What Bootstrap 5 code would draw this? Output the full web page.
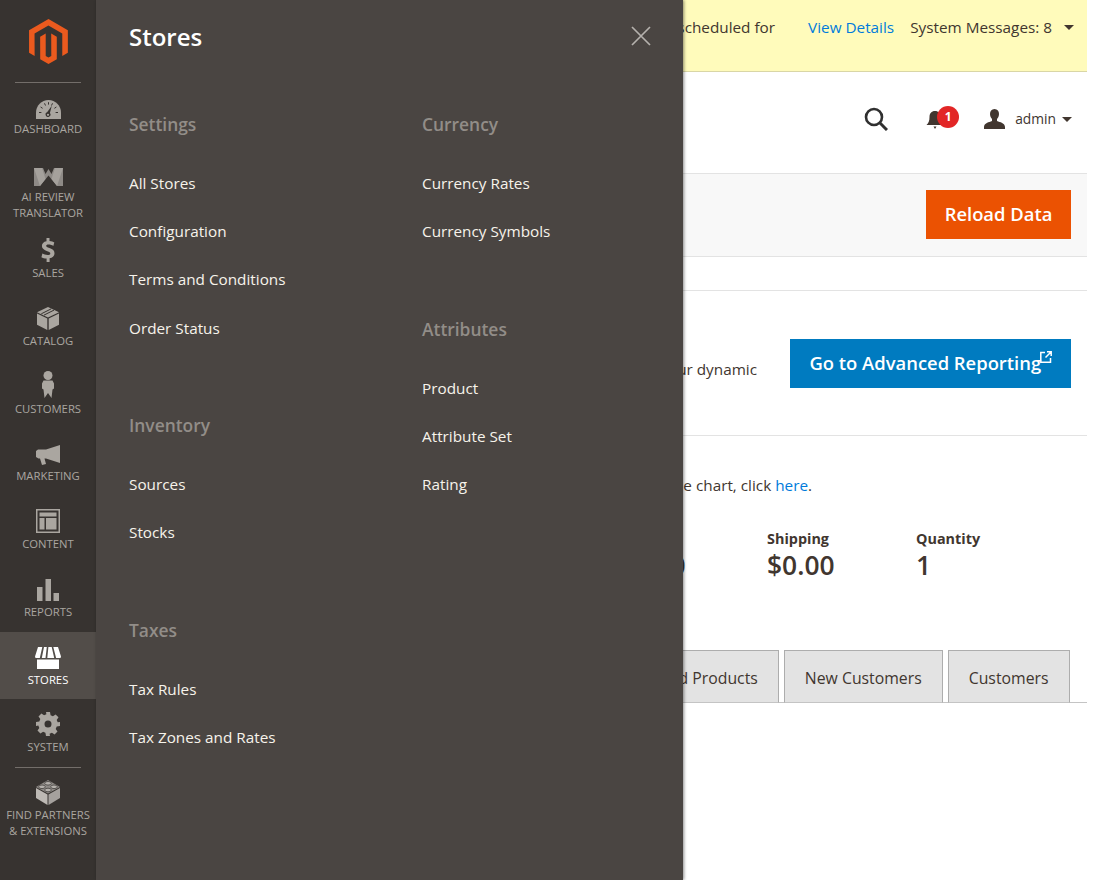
<!DOCTYPE html>
<html lang="en"><head><meta charset="utf-8"><title>Dashboard</title>
<link href="https://cdn.jsdelivr.net/npm/bootstrap@5.3.0/dist/css/bootstrap.min.css" rel="stylesheet">
<style>
html,body{height:880px;overflow:hidden}
body{font-family:"Open Sans",sans-serif;color:#41362f;background:#fff;font-size:15.3px}
.shell{width:1087px;height:880px;position:relative;overflow:hidden}
.rail{width:96px;flex:none;background:#373330;height:880px}
.rail-logo{height:82px}
.rail-rule{height:1px;background:#736e6a;margin:0 15px}
.rail-item{height:67.75px;color:#aaa6a0;font-size:11.3px;line-height:16px;text-align:center;text-transform:uppercase;text-decoration:none;display:block;white-space:nowrap}
.rail-item .glyph{height:37px;margin-bottom:3px;display:flex;justify-content:center;align-items:flex-end}
.rail-item svg{display:block}
.rail-first{height:66px}
.rail-first .glyph{height:36px;margin-bottom:2px}
.rail-tall{height:76px}
.rail-last .glyph{margin-bottom:2px}
.rail-active{background:#524d49;color:#fff}
.stage{width:991px;flex:none}
.msgbar{height:72px;background:#fffbbb;border-bottom:1px solid #d9d6a6;padding:17px 13px 0 0;line-height:20px}
.msgbar a,.plain-link{color:#007bdb;text-decoration:none}
.topbar{height:102px;border-bottom:1px solid #e3e3e3;padding:0 15px 8px 0}
.tool-name{font-size:13.8px;padding-top:2px}
.bell-wrap{width:36px;height:26px}
.bell-count{position:absolute;left:12px;top:0;width:22px;height:22px;background:#e22626;color:#fff;border-radius:50%;font-size:12px;font-weight:700;line-height:22px;text-align:center}
.caret{display:inline-block;border:5px solid transparent;border-top:5px solid #41362f;border-bottom:0}
.band{height:83px;background:#f8f8f8;border-bottom:1px solid #e3e3e3;padding:0 16px 2px 0}
.big-btn{border-radius:0;border:0;color:#fff;font-size:18.4px;font-weight:600;height:49px;line-height:47px;padding:0;white-space:nowrap}
.big-btn:hover{color:#fff}
.btn-reload{background:#eb5202;width:145px}
.btn-report{background:#007bc0;width:281px;text-align:left;padding-left:19.5px}
.btn-report svg{vertical-align:7px;margin-left:-1px}
.gap-strip{height:34px;border-bottom:1px solid #e3e3e3}
.report-sect{height:145px;border-bottom:1px solid #e3e3e3;padding:48px 16px 0 0;gap:33px}
.report-sect p{margin:20px 0 0;line-height:20px}
.chart-line{margin:0;padding:39px 275px 0 0;line-height:20px;text-align:right}
.stats{padding-top:34px;height:155px;padding-right:18px}
.stat-cell{width:149px}
.stat-last{width:153px}
.stat-cell b{display:block;font-weight:700;font-size:14.4px;line-height:20px}
.stat-cell span{display:block;font-size:26.4px;font-weight:600;line-height:32px}
.tabset{height:53px;border-bottom:1px solid #c4c4c4;padding-right:17.5px;gap:5px}
.tabset .tab-cell{height:53px;background:#e3e3e3;border:1px solid #adadad;border-bottom:1px solid #c4c4c4;padding:17px 20px 0;line-height:20px;font-size:15.8px;white-space:nowrap;color:#41362f;text-decoration:none;display:block}
.slide{position:absolute;left:96px;top:0;width:587px;height:880px;background:#4a4542;box-shadow:1px 0 3px rgba(0,0,0,.45);color:#fff;padding:0 0 0 33px}
.slide-title{font-size:24px;font-weight:600;line-height:32px;margin:0;padding-top:21px;height:112px}
.slide-close{position:absolute;left:535px;top:26px;width:20px;height:20px;background:none;border:0;padding:0}
.slide-col{width:293px;flex:none}
.slide-head{font-size:17.4px;font-weight:600;color:#928d88;line-height:24px;margin:0;height:59px}
.slide-links{margin:0 0 49.4px;padding:0}
.slide-links li{height:48.2px;line-height:24px}
.slide-links a{color:#f7f3eb;text-decoration:none;font-size:15.3px}
</style></head><body>
<div class="shell d-flex">
<nav class="rail">
<div class="rail-logo d-flex justify-content-center pt-3"><svg width="39" height="45" viewBox="0 0 43.2 50" style="margin-top:3px"><path fill="#eb5a1e" d="M21.6 0 0 12.5v25l6.200 3.600-.1-25L21.500 7.100l15.400 8.900v25l6.200-3.600v-25z"/><path fill="#eb5a1e" d="M24.700 41.100l-3.100 1.800-3.100-1.800V16.100l-6.200 3.600.1 25 9.200 5.300 9.200-5.300V19.700l-6.200-3.600z"/></svg></div>
<div class="rail-rule"></div>
<a class="rail-item rail-first" href="#"><span class="glyph"><svg width="25" height="19" viewBox="0 0 25 19"><path fill="#aaa6a0" d="M12.500 0C5.600 0 0 5.600 0 12.500V19h25v-6.500C25 5.600 19.400 0 12.500 0z"/><path fill="none" stroke="#373330" stroke-width="1" d="M3 12.500h2.400M4.600 7l2 1.300M8.500 3.300l1 2.200M12.500 2.200v2.400M16.500 3.300l-1 2.200M20.400 7l-2 1.300M22 12.500h-2.400"/><path fill="#373330" d="M15.800 5.700 13.900 13a2.400 2.400 0 1 1-2.800-.7z"/><circle cx="12" cy="14.800" r="1.100" fill="#aaa6a0"/></svg></span>Dashboard</a>
<a class="rail-item rail-tall" href="#"><span class="glyph"><svg width="29" height="18" viewBox="0 0 29 18"><path fill="#8e8a86" d="M0 0H9L11.500 6 14.500 1 17.500 6 20 0H29V18H23L14.500 7.500 6 18H0z"/><path fill="#a5a19c" d="M0 0 6 18 11.500 11 8 0zM29 0 23 18 17.500 11 21 0z"/></svg></span>AI Review<br>Translator</a>
<a class="rail-item" href="#"><span class="glyph"><svg width="14" height="24" viewBox="0 0 14 24"><path fill="#aaa6a0" d="M5.500 0h3v3c2 .2 3.700.8 4.800 1.500l-1 3.500C11 7.200 9.500 6.600 7.500 6.600c-1.700 0-2.300.6-2.300 1.300 0 .8 1 1.300 3.300 2.100 3.400 1.200 5 2.700 5 5.300 0 2.500-1.700 4.500-4.900 5V24h-3v-3.400c-2-.1-4-.7-5.200-1.400l1-3.600c1.300.7 3.200 1.400 5.100 1.400 1.700 0 2.800-.6 2.800-1.600 0-.9-.9-1.500-3-2.200C3 12 .9 10.500.9 8c0-2.400 1.700-4.300 4.600-4.800z"/></svg></span>Sales</a>
<a class="rail-item" href="#"><span class="glyph"><svg width="22" height="23" viewBox="0 0 22 23"><path fill="#aaa6a0" d="M11 0 22 5.300 11 10.600 0 5.300zM0 6.500l10.300 5V23L0 17.800zM22 6.500v11.300L11.700 23V11.500z"/><path fill="none" stroke="#373330" stroke-width="1" d="M4.300 6.800 14.300 1.800M7 8.100 17 3.100"/></svg></span>Catalog</a>
<a class="rail-item" href="#"><span class="glyph"><svg width="12" height="27" viewBox="0 0 12 27"><circle cx="6" cy="4.500" r="4.500" fill="#aaa6a0"/><path fill="#aaa6a0" d="M1.500 9.500h9l1.500 3v5l-1.500 1L9.500 27 6 22 2.500 27l-1-8.500L0 17.500v-5z"/></svg></span>Customers</a>
<a class="rail-item" href="#"><span class="glyph"><svg width="24" height="20" viewBox="0 0 24 20"><path fill="#aaa6a0" d="M24 0v18L10 13.500H8.500l1.500 5.500-4 1-2-6.500H2.500L0 12V6l2-1.500h8z"/></svg></span>Marketing</a>
<a class="rail-item" href="#"><span class="glyph"><svg width="24" height="24" viewBox="0 0 24 24"><path fill="#aaa6a0" fill-rule="evenodd" d="M0 0h24v24H0zM1.500 1.500v21h21v-21zM3.500 3.500h17v4h-17zM3.500 9h5v11.500h-5zM10 9h10.500v11.500H10z"/></svg></span>Content</a>
<a class="rail-item" href="#"><span class="glyph"><svg width="22" height="22" viewBox="0 0 22 22"><path fill="#aaa6a0" d="M0 8h5.500v14H0zM8.500 0H14v22H8.500zM16.500 14H22v8h-5.500z"/></svg></span>Reports</a>
<a class="rail-item rail-active" href="#"><span class="glyph"><svg width="26" height="22" viewBox="0 0 26 22"><path fill="#fff" d="M3 0H23L26 9.500 25.500 11H.5L0 9.500zM2 12.500H24V22H2z"/><path fill="#524d49" d="M7.300 0H9L6.800 11H4.800zM11.800 0h1.600L12.300 11h-1.800zM16.700 0h1.600L21.100 11h-1.900z"/></svg></span>Stores</a>
<a class="rail-item" href="#"><span class="glyph"><svg width="24" height="24" viewBox="0 0 24 24"><path fill="#aaa6a0" fill-rule="evenodd" d="M10 0h4l.6 3.200 2.300 1 2.700-1.800 2.900 2.900-1.800 2.700 1 2.300L24 10v4l-3.300.6-1 2.300 1.800 2.700-2.900 2.900-2.700-1.800-2.300 1L14 24h-4l-.6-3.300-2.300-1-2.700 1.800-2.900-2.900 1.800-2.700-1-2.300L0 14v-4l3.300-.6 1-2.300-1.800-2.700 2.900-2.900 2.700 1.800 2.300-1zM12 8.500a3.500 3.500 0 1 0 0 7 3.500 3.500 0 0 0 0-7z"/></svg></span>System</a>
<div class="rail-rule"></div>
<a class="rail-item rail-last" href="#"><span class="glyph"><svg width="24" height="25" viewBox="0 0 24 25"><path fill="#8f8b87" d="M12 0 24 7 12 13.500 0 7z"/><path fill="#bdb9b4" d="M0 8v10l11.500 7V14.500z"/><path fill="#a5a19d" d="M24 8v10l-11.500 7V14.500z"/><g fill="#b5b1ac" stroke="#373330" stroke-width=".7"><ellipse cx="12" cy="3.300" rx="3.300" ry="1.800"/><ellipse cx="6" cy="6.800" rx="3.300" ry="1.800"/><ellipse cx="18" cy="6.800" rx="3.300" ry="1.800"/><ellipse cx="12" cy="10" rx="3.300" ry="1.800"/></g></svg></span>Find Partners<br>&amp; Extensions</a>
</nav>
<main class="stage">
<div class="msgbar d-flex justify-content-end">
<span class="text-nowrap">Task "Update Prices" is scheduled for</span><a href="#" style="margin-left:33px">View Details</a><span class="text-nowrap" style="margin-left:16px">System Messages: 8</span><span class="caret" style="margin:8px 0 0 12px"></span>
</div>
<div class="topbar d-flex justify-content-end align-items-center">
<svg width="24" height="24" viewBox="0 0 24 24" style="margin-right:37px"><circle cx="10" cy="10" r="8" fill="none" stroke="#303030" stroke-width="2.600"/><path d="M16 16l7 7" stroke="#303030" stroke-width="3" fill="none"/></svg>
<span class="bell-wrap position-relative d-block" style="margin-right:23px"><svg width="20" height="20" viewBox="0 0 20 20" class="d-block" style="margin-top:4px"><path fill="#41362f" d="M10 1c3.500 0 5.500 2.500 5.500 6 0 4 1 6 3 8H1.500c2-2 3-4 3-8 0-3.500 2-6 5.500-6zM8.500 16.500h3L10 19z"/></svg><span class="bell-count">1</span></span>
<svg width="21" height="20" viewBox="0 0 21 20" style="margin-right:10px"><path fill="#41362f" d="M10.500 0c3 0 4.500 2.200 4.500 5 0 2-1 4-2 5v2c3 1.200 8 2 8 6v2H0v-2c0-4 5-4.800 8-6v-2C7 9 6 7 6 5c0-2.800 1.500-5 4.500-5z"/></svg>
<span class="tool-name">admin</span><span class="caret" style="margin:2px 0 0 6px"></span>
</div>
<div class="band d-flex justify-content-end align-items-center"><a class="btn big-btn btn-reload" href="#">Reload Data</a></div>
<div class="gap-strip"></div>
<div class="report-sect d-flex justify-content-end"><p class="text-nowrap">Reload your dynamic</p><a class="btn big-btn btn-report" href="#">Go to Advanced Reporting<svg width="12" height="12" viewBox="0 0 12 12"><path fill="none" stroke="#fff" stroke-width="1.500" d="M5 1.500H.8v9.700h9.700V7M7 .8h4.200V5M11 1 5.500 6.500"/></svg></a></div>
<p class="chart-line text-nowrap">To view the chart, click <a class="plain-link" href="#">here</a>.</p>
<div class="stats d-flex justify-content-end">
<div class="stat-cell"><b>Tax</b><span>$0.00</span></div>
<div class="stat-cell"><b>Shipping</b><span>$0.00</span></div>
<div class="stat-cell stat-last"><b>Quantity</b><span>1</span></div>
</div>
<div class="tabset d-flex justify-content-end">
<a class="tab-cell" href="#">Ordered Products</a><a class="tab-cell" href="#">New Customers</a><a class="tab-cell" href="#">Customers</a>
</div>
</main>
<aside class="slide">
<h2 class="slide-title">Stores</h2>
<button class="slide-close" aria-label="Close"><svg width="20" height="20" viewBox="0 0 20 20" class="d-block"><path d="M1 1l18 18M19 1 1 19" stroke="#b5b1ad" stroke-width="1.700" fill="none"/></svg></button>
<div class="d-flex">
<div class="slide-col">
<h3 class="slide-head">Settings</h3>
<ul class="slide-links list-unstyled"><li><a href="#">All Stores</a></li><li><a href="#">Configuration</a></li><li><a href="#">Terms and Conditions</a></li><li><a href="#">Order Status</a></li></ul>
<h3 class="slide-head">Inventory</h3>
<ul class="slide-links list-unstyled"><li><a href="#">Sources</a></li><li><a href="#">Stocks</a></li></ul>
<h3 class="slide-head">Taxes</h3>
<ul class="slide-links list-unstyled"><li><a href="#">Tax Rules</a></li><li><a href="#">Tax Zones and Rates</a></li></ul>
</div>
<div class="slide-col">
<h3 class="slide-head">Currency</h3>
<ul class="slide-links list-unstyled"><li><a href="#">Currency Rates</a></li><li><a href="#">Currency Symbols</a></li></ul>
<h3 class="slide-head">Attributes</h3>
<ul class="slide-links list-unstyled"><li><a href="#">Product</a></li><li><a href="#">Attribute Set</a></li><li><a href="#">Rating</a></li></ul>
</div>
</div>
</aside>
</div>
<script src="https://cdn.jsdelivr.net/npm/bootstrap@5.3.0/dist/js/bootstrap.bundle.min.js"></script>
</body></html>
